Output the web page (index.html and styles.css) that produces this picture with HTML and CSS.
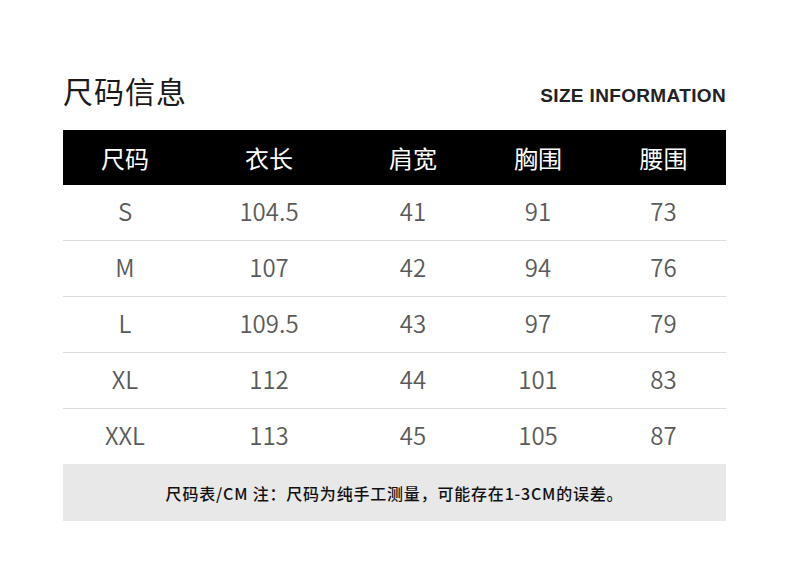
FILE: index.html
```html
<!DOCTYPE html>
<html lang="zh">
<head>
<meta charset="utf-8">
<link rel="stylesheet" href="styles.css">
</head>
<body>
<div class="page">
  <div class="title-bar">
    <h1 class="title">尺码信息</h1>
    <div class="subtitle">SIZE INFORMATION</div>
  </div>
  <div class="table">
    <div class="row head">
      <div class="cell">尺码</div><div class="cell">衣长</div><div class="cell">肩宽</div><div class="cell">胸围</div><div class="cell">腰围</div>
    </div>
    <div class="row">
      <div class="cell">S</div><div class="cell">104.5</div><div class="cell">41</div><div class="cell">91</div><div class="cell">73</div>
    </div>
    <div class="row">
      <div class="cell">M</div><div class="cell">107</div><div class="cell">42</div><div class="cell">94</div><div class="cell">76</div>
    </div>
    <div class="row">
      <div class="cell">L</div><div class="cell">109.5</div><div class="cell">43</div><div class="cell">97</div><div class="cell">79</div>
    </div>
    <div class="row">
      <div class="cell">XL</div><div class="cell">112</div><div class="cell">44</div><div class="cell">101</div><div class="cell">83</div>
    </div>
    <div class="row last">
      <div class="cell">XXL</div><div class="cell">113</div><div class="cell">45</div><div class="cell">105</div><div class="cell">87</div>
    </div>
    <div class="note">尺码表/CM 注：尺码为纯手工测量，可能存在1-3CM的误差。</div>
  </div>
</div>
</body>
</html>
```
FILE: styles.css
```css
* { box-sizing: border-box; }
html, body { margin: 0; padding: 0; background: #ffffff; }
body { font-family: "Noto Sans CJK SC", "Noto Sans", sans-serif; }
.page { width: 790px; height: 561px; padding: 72px 64px 0 63px; }
.title-bar { display: flex; justify-content: space-between; align-items: flex-end; height: 58px; }
.title { margin: 0; font-size: 30px; font-weight: 400; line-height: 36px; color: #1a1a1a; padding-bottom: 22px; letter-spacing: 1px; }
.subtitle { font-family: "Liberation Sans", Arial, sans-serif; font-weight: 700; font-size: 19px; letter-spacing: 0.35px; line-height: 20px; color: #222; padding-bottom: 24px; }
.table { width: 663px; }
.row { display: grid; grid-template-columns: 124px 164px 124px 126px 125px; height: 56px; border-bottom: 1px solid #dcdcdc; align-items: center; }
.row.last { border-bottom: none; height: 55px; }
.head { background: #000; height: 55px; border-bottom: none; }
.cell { text-align: center; font-size: 24px; font-weight: 350; color: #5a5a5a; line-height: 1; padding-bottom: 4px; }
.head .cell { color: #fff; font-weight: 400; font-size: 24px; padding-bottom: 0; }
.note { background: #e8e8e8; height: 57px; display: flex; align-items: center; justify-content: center; font-size: 16px; font-weight: 500; color: #111; letter-spacing: 0.8px; }
```
